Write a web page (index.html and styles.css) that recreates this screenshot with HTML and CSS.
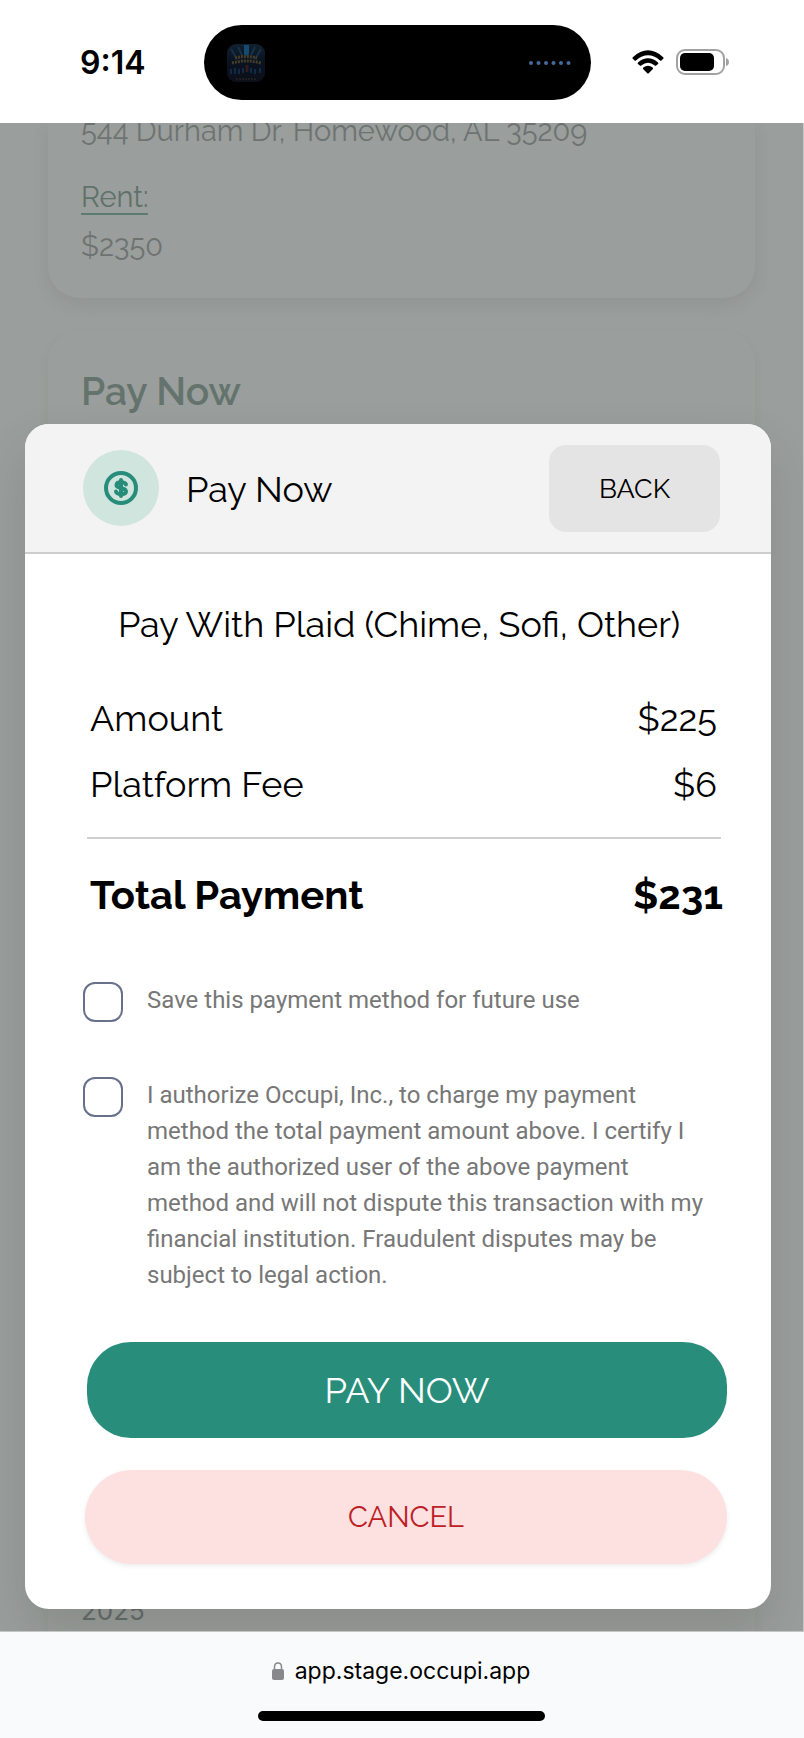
FILE: index.html
```html
<!DOCTYPE html>
<html lang="en">
<head>
<meta charset="utf-8">
<meta name="viewport" content="width=device-width, initial-scale=1">
<title>Occupi – Pay Now</title>
<link rel="stylesheet" href="styles.css">
</head>
<body>
<div class="screen">
  <header class="status">
    <time class="status-time">9:14</time>
    <div class="island">
      <svg class="island-art" viewBox="0 0 38 38" aria-hidden="true">
        <defs>
          <linearGradient id="art" x1="0" y1="0" x2="0" y2="1">
            <stop offset="0" stop-color="#10202c"/><stop offset=".5" stop-color="#0a1220"/><stop offset="1" stop-color="#0c0f18"/>
          </linearGradient>
        </defs>
        <rect width="38" height="38" rx="9" fill="url(#art)"/>
        <path d="M17 1h5v9q-2.500 3-5 0z" fill="#174a70"/>
        <path d="M4 5l6 10M34 5l-6 10M11 3l4 8M28 3l-4 8" stroke="#163148" stroke-width="2"/>
        <path d="M8 14q11-3 22 0M5 19q14-4 29 0" fill="none" stroke="#453d28" stroke-width="3" stroke-dasharray="2 1"/>
        <path d="M4 25v5M8 24v6M12 25v5M16 24v5M24 24v5M28 25v5M33 24v5" stroke="#112a45" stroke-width="2"/>
        <path d="M20 21v7" stroke="#301b20" stroke-width="3"/>
        <path d="M9 35h21" stroke="#302e2a" stroke-dasharray="2 1"/>
      </svg>
      <svg class="island-dots" viewBox="0 0 42 4" aria-hidden="true">
        <g fill="#48689a"><circle cx="2" cy="2" r="2"/><circle cx="9.500" cy="2" r="2"/><circle cx="17" cy="2" r="2"/><circle cx="24.500" cy="2" r="2"/><circle cx="32" cy="2" r="2"/><circle cx="39.500" cy="2" r="2"/></g>
      </svg>
    </div>
    <div class="status-icons">
      <svg class="wifi" viewBox="0 0 32 24" aria-label="Wi-Fi" role="img">
        <path d="M.800 7.200Q16-6.500 31.200 7.200Q32 8 31.200 8.800L29.400 10.400Q28.700 11 28 10.400Q16 .200 4 10.400Q3.300 11 2.600 10.400L.800 8.800Q0 8 .800 7.200z"/>
        <path d="M6 12.400Q16 4 26 12.400Q26.800 13.200 26 14L24.200 15.600Q23.500 16.200 22.800 15.600Q16 10 9.200 15.600Q8.500 16.200 7.800 15.600L6 14Q5.200 13.200 6 12.400z"/>
        <path d="M11.300 17.600Q16 13.800 20.700 17.600Q21.500 18.400 20.700 19.200L16.700 23.300Q16 24 15.300 23.300L11.300 19.200Q10.500 18.400 11.300 17.600z"/>
      </svg>
      <svg class="battery" viewBox="0 0 54 26" aria-label="Battery" role="img">
        <rect x="1" y="1" width="47" height="24" rx="8" fill="#fff" stroke="#a2a2a2" stroke-width="2"/>
        <rect x="4" y="4" width="34" height="18" rx="5"/>
        <path d="M50 9q3 1 3 4t-3 4z" fill="#a2a2a2"/>
      </svg>
    </div>
  </header>

  <main class="stage">
    <div class="backdrop">
      <section class="card card-lease">
        <p class="card-text">544 Durham Dr, Homewood, AL 35209</p>
        <p class="card-label">Rent:</p>
        <p class="card-text">$2350</p>
      </section>
      <section class="card card-pay">
        <h2 class="card-title">Pay Now</h2>
        <p class="card-date">2025</p>
      </section>
    </div>

    <form class="dialog" role="dialog" aria-labelledby="dialog-title">
      <div class="dialog-head">
        <span class="badge">
          <svg class="coin" viewBox="0 0 34 34" aria-hidden="true">
            <g fill="none" stroke="#278d7a" stroke-width="4" stroke-linecap="round">
              <circle cx="17" cy="17" r="15"/>
              <path d="M17 9v16"/>
              <path d="M22 13.500C21 11 13 10 12.500 14C12 18 22 16 22 20.500C21.500 24.500 12.500 23.500 12 20.500"/>
            </g>
          </svg>
        </span>
        <h1 class="dialog-title" id="dialog-title">Pay Now</h1>
        <button class="back" type="button">BACK</button>
      </div>
      <div class="dialog-body">
        <h2 class="method">Pay With Plaid (Chime, Sofi, Other)</h2>
        <dl class="lines">
          <div class="line"><dt>Amount</dt><dd>$225</dd></div>
          <div class="line"><dt>Platform Fee</dt><dd>$6</dd></div>
        </dl>
        <dl class="total"><dt>Total Payment</dt><dd>$231</dd></dl>
        <div class="checks">
          <label class="check"><input class="box" type="checkbox"><span>Save this payment method for future use</span></label>
          <label class="check"><input class="box" type="checkbox"><span>I authorize Occupi, Inc., to charge my payment method the total payment amount above. I certify I am the authorized user of the above payment method and will not dispute this transaction with my financial institution. Fraudulent disputes may be subject to legal action.</span></label>
        </div>
        <div class="actions">
          <button class="action pay" type="submit">PAY NOW</button>
          <button class="action cancel" type="button">CANCEL</button>
        </div>
      </div>
    </form>
  </main>

  <footer class="browser-bar">
    <a class="address" href="#">
      <svg class="lock" viewBox="0 0 12 18" aria-hidden="true">
        <rect y="7" width="12" height="11" rx="2" fill="#88888c"/>
        <path d="M2.500 8V5Q2.500 1 6 1t3.500 4v3" fill="none" stroke="#88888c" stroke-width="1.500"/>
      </svg>
      app.stage.occupi.app
    </a>
    <div class="home"></div>
  </footer>
</div>
</body>
</html>
```
FILE: styles.css
```css
* { box-sizing: border-box; }
body { margin: 0; background: #fff; color: #000; font-family: Raleway, Lato, sans-serif; }
h1, h2, p, dl, dd { margin: 0; font-weight: 400; }
button { border: 0; font: inherit; cursor: pointer; }

.screen { display: flex; flex-direction: column; min-height: 100vh; }

/* Phone status bar */
.status { display: grid; grid-template-columns: 1fr 387px 1fr; align-items: center; height: 123px; padding: 2px 9px 0 0; }
.status-time { padding-left: 80px; font: 600 32px/40px Inter, sans-serif; }
.island { display: flex; align-items: center; justify-content: space-between; height: 75px; padding: 0 20px 0 23px; border-radius: 38px; background: #000; }
.island-art { width: 38px; height: 38px; }
.island-dots { width: 42px; height: 4px; }
.status-icons { display: flex; align-items: center; gap: 12px; padding: 0 0 2px 41px; }
.wifi { width: 32px; height: 24px; }
.battery { width: 54px; height: 26px; }

/* Page and dialog share one grid cell */
.stage { display: grid; flex: 1; overflow: hidden; border-right: 1px solid #c5c8c7; background: #9a9e9c; }
.backdrop { grid-area: 1 / 1; display: flex; flex-direction: column; gap: 32px; padding: 0 48px; color: #6e7371; font-variant-numeric: oldstyle-nums; }
.card { padding: 0 33px; }
.card-lease { display: flex; flex-direction: column; align-items: flex-start; height: 175px; border-radius: 0 0 32px 32px; box-shadow: 0 6px 16px rgba(70, 78, 74, .12); }
.card-text { font-size: 29px; line-height: 36px; margin-top: -10px; }
.card-label { margin: 32px 0 23px; border-bottom: 2px solid #5e7b71; color: #60716a; font-size: 29px; line-height: 32px; }
.card-pay { display: flex; flex: 1; flex-direction: column; justify-content: space-between; padding-top: 37px; border-radius: 32px 32px 0 0; box-shadow: 0 6px 12px rgba(70, 78, 74, .06); }
.card-title { color: #64736d; font-size: 39px; font-weight: 600; line-height: 48px; }
.card-date { padding-bottom: 4px; color: #666b69; font: 26px/32px Inter, sans-serif; }

.dialog { grid-area: 1 / 1; align-self: start; margin: 301px 32px 21px 25px; overflow: hidden; border-radius: 24px; background: #fff; box-shadow: 0 24px 48px rgba(50, 55, 52, .16); }
.dialog-head { display: flex; align-items: center; height: 130px; padding: 0 51px 0 58px; border-bottom: 2px solid #cdcdcd; background: #f3f3f3; }
.badge { display: grid; place-items: center; width: 76px; height: 76px; border-radius: 50%; background: #cfe5dd; }
.coin { width: 34px; height: 34px; }
.dialog-title { flex: 1; padding: 2px 0 0 27px; font-size: 36px; line-height: 44px; }
.back { width: 171px; height: 87px; border-radius: 17px; background: #e4e4e4; font-size: 27px; color: #000; }

.dialog-body { padding: 46px 44px 45px 58px; font-variant-numeric: oldstyle-nums; }
.method { font-size: 36px; line-height: 48px; text-align: center; margin-right: 12px; }
.lines { display: grid; gap: 18px; margin: 46px 6px 0 4px; padding: 0 4px 29px 3px; border-bottom: 2px solid #cfcfcf; }
.line, .total { display: flex; justify-content: space-between; }
.line { font-size: 36px; line-height: 48px; }
.total { margin: 32px 4px 0 7px; font-size: 40px; line-height: 48px; font-weight: 700; }
.total dd { font-weight: inherit; }

.checks { display: grid; gap: 55px; margin-top: 63px; padding-right: 12px; }
.check { display: grid; grid-template-columns: 40px 1fr; gap: 24px; min-height: 40px; color: #777; font: 24px/36px Roboto, sans-serif; }
.box { appearance: none; width: 40px; height: 40px; margin: 0; border: 2px solid #677189; border-radius: 12px; background: #fff; }
.box:checked { background: #278d7a; }
.actions { display: grid; gap: 32px; margin-top: 49px; }
.action { height: 96px; border-radius: 44px; }
.pay { margin-left: 4px; background: #288e7b; color: #fff; font-size: 36px; }
.cancel { height: 94px; margin-left: 2px; border-radius: 47px; background: #fde1e1; color: #bd2025; font-size: 29px; box-shadow: 0 2px 5px rgba(0, 0, 0, .08); }

/* Browser address bar */
.browser-bar { display: flex; flex-direction: column; align-items: center; justify-content: space-between; height: 107px; padding: 23px 2px 17px 0; border-top: 1px solid #c4c6c6; background: #f9fafb; }
.address { display: flex; align-items: center; gap: 11px; color: #000; font: 23px/32px Inter, sans-serif; text-decoration: none; }
.lock { width: 12px; height: 18px; }
.home { width: 287px; height: 10px; border-radius: 5px; background: #000; }
```
